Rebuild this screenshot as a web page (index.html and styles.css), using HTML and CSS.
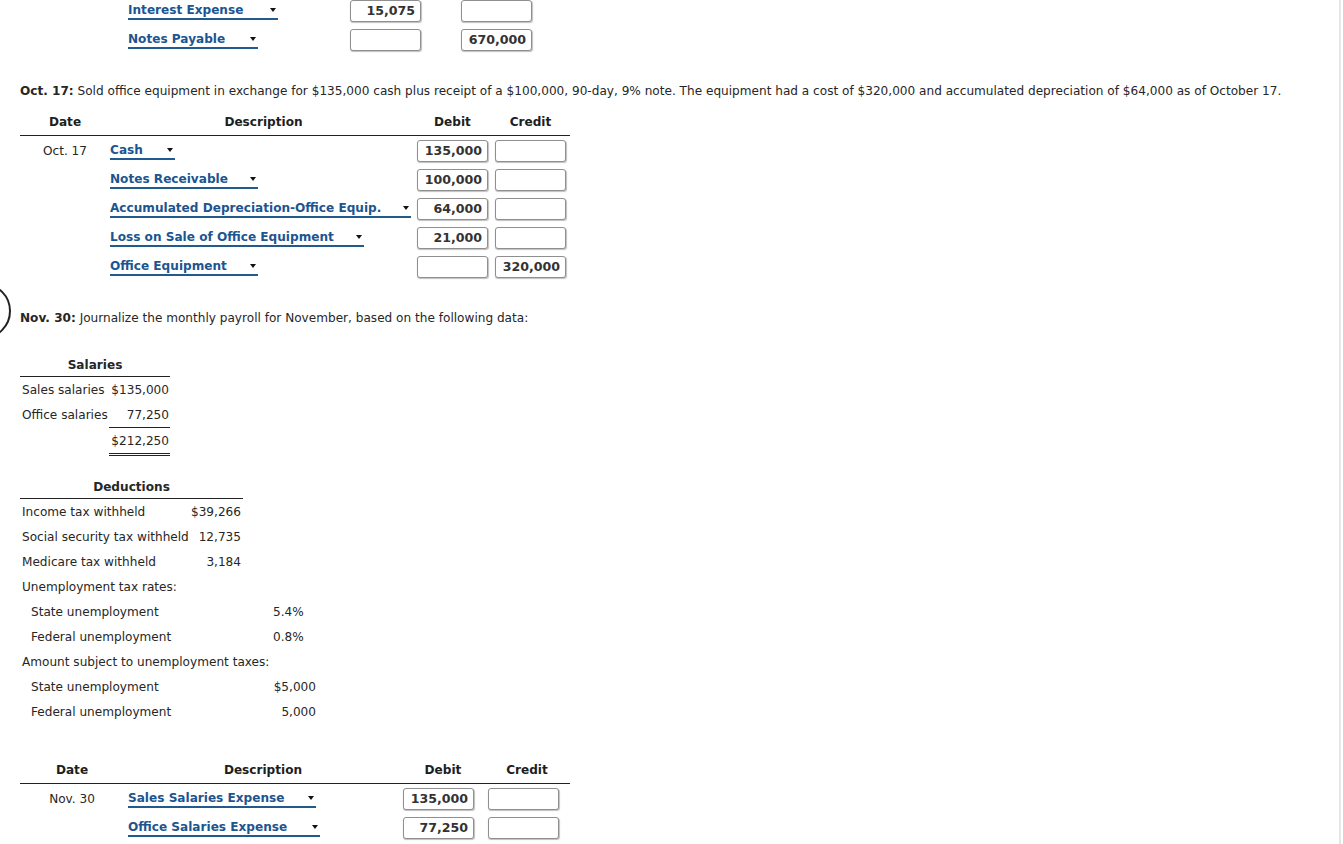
FILE: index.html
```html
<!DOCTYPE html>
<html>
<head>
<meta charset="utf-8">
<link rel="stylesheet" href="styles.css">
</head>
<body>
<div class="page">
  <div class="marker"></div>
  <div class="scroll-edge"></div>

  <div class="jt jt-top">
    <div class="jrow">
      <div class="jdate"></div>
      <div class="jdesc"><span class="sel" style="width:150px">Interest Expense<i class="arr"></i></span></div>
      <div class="jdeb"><span class="box">15,075</span></div>
      <div class="jcred"><span class="box"></span></div>
    </div>
    <div class="jrow">
      <div class="jdate"></div>
      <div class="jdesc"><span class="sel" style="width:130px">Notes Payable<i class="arr"></i></span></div>
      <div class="jdeb"><span class="box"></span></div>
      <div class="jcred"><span class="box">670,000</span></div>
    </div>
  </div>

  <p class="prompt p-oct"><b>Oct. 17:</b> Sold office equipment in exchange for $135,000 cash plus receipt of a $100,000, 90-day, 9% note. The equipment had a cost of $320,000 and accumulated depreciation of $64,000 as of October 17.</p>

  <div class="jt jt-oct">
    <div class="jhead">
      <div class="jdate">Date</div>
      <div class="jdesc">Description</div>
      <div class="jdeb">Debit</div>
      <div class="jcred">Credit</div>
    </div>
    <div class="jrow">
      <div class="jdate">Oct. 17</div>
      <div class="jdesc"><span class="sel" style="width:65px">Cash<i class="arr"></i></span></div>
      <div class="jdeb"><span class="box">135,000</span></div>
      <div class="jcred"><span class="box"></span></div>
    </div>
    <div class="jrow">
      <div class="jdate"></div>
      <div class="jdesc"><span class="sel" style="width:148px">Notes Receivable<i class="arr"></i></span></div>
      <div class="jdeb"><span class="box">100,000</span></div>
      <div class="jcred"><span class="box"></span></div>
    </div>
    <div class="jrow">
      <div class="jdate"></div>
      <div class="jdesc"><span class="sel" style="width:301px">Accumulated Depreciation-Office Equip.<i class="arr"></i></span></div>
      <div class="jdeb"><span class="box">64,000</span></div>
      <div class="jcred"><span class="box"></span></div>
    </div>
    <div class="jrow">
      <div class="jdate"></div>
      <div class="jdesc"><span class="sel" style="width:254px">Loss on Sale of Office Equipment<i class="arr"></i></span></div>
      <div class="jdeb"><span class="box">21,000</span></div>
      <div class="jcred"><span class="box"></span></div>
    </div>
    <div class="jrow">
      <div class="jdate"></div>
      <div class="jdesc"><span class="sel" style="width:148px">Office Equipment<i class="arr"></i></span></div>
      <div class="jdeb"><span class="box"></span></div>
      <div class="jcred"><span class="box">320,000</span></div>
    </div>
  </div>

  <p class="prompt p-nov"><b>Nov. 30:</b> Journalize the monthly payroll for November, based on the following data:</p>

  <table class="sal">
    <colgroup><col class="c1"><col class="c2"></colgroup>
    <tr><th colspan="2">Salaries</th></tr>
    <tr><td>Sales salaries</td><td class="num">$135,000</td></tr>
    <tr><td>Office salaries</td><td class="num uline">77,250</td></tr>
    <tr><td></td><td class="num dline">$212,250</td></tr>
  </table>

  <div class="ded">
    <div class="ded-head">Deductions</div>
    <div class="lbl">Income tax withheld</div><div class="val">$39,266</div><div></div>
    <div class="lbl">Social security tax withheld</div><div class="val">12,735</div><div></div>
    <div class="lbl">Medicare tax withheld</div><div class="val">3,184</div><div></div>
    <div class="lbl span">Unemployment tax rates:</div>
    <div class="lbl ind">State unemployment</div><div></div><div class="pct">5.4%</div>
    <div class="lbl ind">Federal unemployment</div><div></div><div class="pct">0.8%</div>
    <div class="lbl span">Amount subject to unemployment taxes:</div>
    <div class="lbl ind">State unemployment</div><div></div><div class="amt">$5,000</div>
    <div class="lbl ind">Federal unemployment</div><div></div><div class="amt">5,000</div>
  </div>

  <div class="jt jt-nov">
    <div class="jhead">
      <div class="jdate">Date</div>
      <div class="jdesc">Description</div>
      <div class="jdeb">Debit</div>
      <div class="jcred">Credit</div>
    </div>
    <div class="jrow">
      <div class="jdate">Nov. 30</div>
      <div class="jdesc"><span class="sel" style="width:188px">Sales Salaries Expense<i class="arr"></i></span></div>
      <div class="jdeb"><span class="box">135,000</span></div>
      <div class="jcred"><span class="box"></span></div>
    </div>
    <div class="jrow">
      <div class="jdate"></div>
      <div class="jdesc"><span class="sel" style="width:192px">Office Salaries Expense<i class="arr"></i></span></div>
      <div class="jdeb"><span class="box">77,250</span></div>
      <div class="jcred"><span class="box"></span></div>
    </div>
  </div>
</div>
</body>
</html>
```
FILE: styles.css
```css
html, body {
  margin: 0;
  padding: 0;
  background: #fff;
}
body {
  font-family: "DejaVu Sans", Verdana, sans-serif;
  font-size: 12.1px;
  color: #262626;
  overflow: hidden;
  height: 844px;
}
.page {
  position: relative;
  padding: 0 0 0 20px;
}
.marker {
  position: absolute;
  left: -45px;
  top: 287px;
  width: 52px;
  height: 52px;
  border: 2.5px solid #222;
  border-radius: 50%;
}
.scroll-edge {
  position: fixed;
  top: 0;
  bottom: 0;
  left: 1339px;
  width: 2px;
  background: #e6e6e6;
}

/* journal tables */
.jt { display: flex; flex-direction: column; width: 550px; }
.jhead, .jrow { display: grid; align-items: center; }
.jhead {
  font-weight: bold;
  height: 27px;
  border-bottom: 1px solid #222;
  color: #1e1e1e;
}
.jhead > div { text-align: center; }
.jrow { height: 29px; }
.jrow .jdate { text-align: center; }
.jrow .jdesc { display: flex; align-self: stretch; align-items: flex-start; }
.jrow .jdeb, .jrow .jcred { display: flex; }
.jcred { grid-column: 5; }

.jt-top { margin-top: -4px; }
.jt-top .jrow { grid-template-columns: 108px 222px 71px 40px 71px; }

.jt-oct .jhead, .jt-oct .jrow { grid-template-columns: 90px 307px 71px 7px 71px; }
.jt-oct .jhead { margin-top: 9px; }

.jt-nov { margin-top: 32px; }
.jt-nov .jhead { grid-template-columns: 104px 278px 82px 0 86px; }
.jt-nov .jrow { grid-template-columns: 104px 279px 71px 14px 71px; }
.jt-nov .jrow .jdesc { padding-left: 4px; }

.box {
  display: block;
  box-sizing: border-box;
  width: 71px;
  height: 22px;
  border: 1px solid #8f8f8f;
  border-radius: 3px;
  box-shadow: 0.5px 1px 1px rgba(0,0,0,0.25);
  font-weight: bold;
  text-align: right;
  padding: 0 5px;
  line-height: 20px;
  font-size: 12.6px;
  color: #333;
  background: #fff;
}

.sel {
  position: relative;
  display: block;
  box-sizing: border-box;
  height: 18.5px;
  line-height: 16px;
  margin-top: 5.5px;
  font-weight: bold;
  font-size: 12.1px;
  color: #1c5590;
  border-bottom: 2.5px solid #215a8c;
  white-space: nowrap;
}
.arr {
  position: absolute;
  right: 2px;
  top: 6px;
  width: 0;
  height: 0;
  border-left: 3.5px solid transparent;
  border-right: 3.5px solid transparent;
  border-top: 4px solid #111;
}

.prompt { margin: 0; line-height: 16px; white-space: nowrap; }
.p-oct { margin-top: 29px; }
.p-nov { margin-top: 29px; }

/* salaries */
.sal { border-collapse: collapse; margin-top: 27px; table-layout: fixed; width: 150px; }
.sal col.c1 { width: 89px; }
.sal col.c2 { width: 61px; }
.sal th {
  font-weight: bold;
  text-align: center;
  height: 23px;
  padding: 0;
  border-bottom: 1px solid #222;
  vertical-align: middle;
}
.sal td { height: 25px; padding: 0 1px 0 2px; white-space: nowrap; vertical-align: middle; }
.sal td.num { text-align: right; }
.sal td.uline { border-bottom: 1px solid #222; }
.sal td.dline { border-bottom: 3px double #222; }

/* deductions */
.ded {
  margin-top: 20px;
  display: grid;
  grid-template-columns: 170px 53px 75px;
  grid-template-rows: 23px;
  grid-auto-rows: 25px;
  align-items: center;
}
.ded-head {
  grid-column: 1 / 4;
  width: 223px;
  box-sizing: border-box;
  height: 23px;
  line-height: 22px;
  text-align: center;
  font-weight: bold;
  border-bottom: 1px solid #222;
  align-self: start;
}
.ded .lbl { padding-left: 2px; white-space: nowrap; }
.ded .span { grid-column: 1 / 4; }
.ded .ind { padding-left: 11px; }
.ded .val { text-align: right; padding-right: 2px; white-space: nowrap; }
.ded .pct { padding-left: 30px; }
.ded .amt { text-align: right; padding-right: 2px; }
```
